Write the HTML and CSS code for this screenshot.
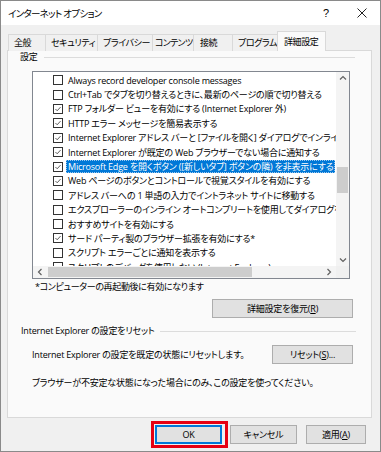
FILE: index.html
```html
<!DOCTYPE html>
<html lang="ja">
<head>
<meta charset="utf-8">
<title>インターネット オプション</title>
<link rel="stylesheet" href="styles.css">
</head>
<body>
<div class="window">
  <div class="titlebar">
    <span class="title">インターネット オプション</span>
    <span class="tb-help">?</span>
    <span class="tb-close">
      <svg width="10" height="10" viewBox="0 0 10 10"><path d="M0.5 0.5 L9.5 9.5 M9.5 0.5 L0.5 9.5" stroke="#222" stroke-width="1" fill="none"/></svg>
    </span>
  </div>
  <div class="body">
    <div class="tabs">
      <span class="tab">全般</span>
      <span class="tab">セキュリティ</span>
      <span class="tab">プライバシー</span>
      <span class="tab">コンテンツ</span>
      <span class="tab">接続</span>
      <span class="tab">プログラム</span>
      <span class="tab active">詳細設定</span>
    </div>
    <div class="panel">
      <div class="group-head g1"><span class="glabel">設定</span><span class="gline"></span></div>
      <div class="listbox">
        <div class="rows">
          <div class="row"><span class="cb"></span><span class="lbl">Always record developer console messages</span></div>
          <div class="row"><span class="cb"></span><span class="lbl">Ctrl+Tab でタブを切り替えるときに、最新のページの順で切り替える</span></div>
          <div class="row"><span class="cb on"><svg viewBox="0 0 10 10"><path d="M1.8 5 L4 7.2 L8.2 2.6" stroke="#333" stroke-width="1" fill="none"/></svg></span><span class="lbl">FTP フォルダー ビューを有効にする (Internet Explorer 外)</span></div>
          <div class="row"><span class="cb on"><svg viewBox="0 0 10 10"><path d="M1.8 5 L4 7.2 L8.2 2.6" stroke="#333" stroke-width="1" fill="none"/></svg></span><span class="lbl">HTTP エラー メッセージを簡易表示する</span></div>
          <div class="row"><span class="cb on"><svg viewBox="0 0 10 10"><path d="M1.8 5 L4 7.2 L8.2 2.6" stroke="#333" stroke-width="1" fill="none"/></svg></span><span class="lbl">Internet Explorer アドレス バーと [ファイルを開く] ダイアログでインライン オートコンプリートを使用する</span></div>
          <div class="row"><span class="cb on"><svg viewBox="0 0 10 10"><path d="M1.8 5 L4 7.2 L8.2 2.6" stroke="#333" stroke-width="1" fill="none"/></svg></span><span class="lbl">Internet Explorer が既定の Web ブラウザーでない場合に通知する</span></div>
          <div class="row"><span class="cb on"><svg viewBox="0 0 10 10"><path d="M1.8 5 L4 7.2 L8.2 2.6" stroke="#333" stroke-width="1" fill="none"/></svg></span><span class="lbl sel">Microsoft Edge を開くボタン ([新しいタブ] ボタンの隣) を非表示にする</span></div>
          <div class="row"><span class="cb on"><svg viewBox="0 0 10 10"><path d="M1.8 5 L4 7.2 L8.2 2.6" stroke="#333" stroke-width="1" fill="none"/></svg></span><span class="lbl">Web ページのボタンとコントロールで視覚スタイルを有効にする</span></div>
          <div class="row"><span class="cb"></span><span class="lbl">アドレス バーへの 1 単語の入力でイントラネット サイトに移動する</span></div>
          <div class="row"><span class="cb"></span><span class="lbl">エクスプローラーのインライン オートコンプリートを使用してダイアログを実行する</span></div>
          <div class="row"><span class="cb"></span><span class="lbl">おすすめサイトを有効にする</span></div>
          <div class="row"><span class="cb on"><svg viewBox="0 0 10 10"><path d="M1.8 5 L4 7.2 L8.2 2.6" stroke="#333" stroke-width="1" fill="none"/></svg></span><span class="lbl">サード パーティ製のブラウザー拡張を有効にする*</span></div>
          <div class="row"><span class="cb"></span><span class="lbl">スクリプト エラーごとに通知を表示する</span></div>
          <div class="row"><span class="cb"></span><span class="lbl">スクリプトのデバッグを使用しない (Internet Explorer)</span></div>
        </div>
        <div class="vscroll">
          <svg class="arr" width="8" height="6" viewBox="0 0 8 6"><path d="M1 4.5 L4 1.5 L7 4.5" stroke="#606060" stroke-width="1.2" fill="none"/></svg>
          <div class="vtrack"><div class="vthumb"></div></div>
          <svg class="arr" width="8" height="6" viewBox="0 0 8 6"><path d="M1 1.5 L4 4.5 L7 1.5" stroke="#606060" stroke-width="1.2" fill="none"/></svg>
        </div>
        <div class="hscroll">
          <svg class="arr" width="6" height="8" viewBox="0 0 6 8"><path d="M4.5 1 L1.5 4 L4.5 7" stroke="#606060" stroke-width="1.2" fill="none"/></svg>
          <div class="htrack"><div class="hthumb"></div></div>
          <svg class="arr" width="6" height="8" viewBox="0 0 6 8"><path d="M1.5 1 L4.5 4 L1.5 7" stroke="#606060" stroke-width="1.2" fill="none"/></svg>
        </div>
        <div class="corner"></div>
      </div>
      <div class="note">*コンピューターの再起動後に有効になります</div>
      <button class="btn restore">詳細設定を復元(<u>R</u>)</button>
      <div class="group-head g2"><span class="glabel">Internet Explorer の設定をリセット</span><span class="gline"></span></div>
      <div class="reset-row">
        <span class="rtext">Internet Explorer の設定を既定の状態にリセットします。</span>
        <button class="btn reset">リセット(<u>S</u>)...</button>
      </div>
      <div class="warn">ブラウザーが不安定な状態になった場合にのみ、この設定を使ってください。</div>
    </div>
    <div class="buttons">
      <div class="highlight"><button class="btn ok">OK</button></div>
      <button class="btn cancel">キャンセル</button>
      <button class="btn apply">適用(<u>A</u>)</button>
    </div>
  </div>
</div>
</body>
</html>
```
FILE: styles.css
```css
* { box-sizing: border-box; }
html, body { margin: 0; padding: 0; }
body {
  width: 381px;
  height: 452px;
  overflow: hidden;
  font-family: "Open Sans", "Noto Sans CJK JP", sans-serif;
  font-feature-settings: "palt";
  font-size: 9px;
  letter-spacing: -0.2px;
  color: #000;
  background: #f0f0f0;
}
.window {
  width: 381px;
  height: 452px;
  border: 1px solid #8a8a8a;
  background: #f0f0f0;
  display: flex;
  flex-direction: column;
}
.titlebar {
  height: 24px;
  background: #fff;
  display: flex;
  align-items: center;
  padding-left: 7px;
  flex-shrink: 0;
}
.title { font-size: 9.5px; letter-spacing: -0.7px; flex: 1; }
.tb-help { font-size: 11px; width: 12px; margin-right: 22px; font-family: "Liberation Sans", sans-serif; }
.tb-close { width: 10px; height: 10px; margin-right: 13px; display: flex; }
.body {
  flex: 1;
  display: flex;
  flex-direction: column;
  padding: 6px 8px 0 6px;
}
.tabs {
  display: flex;
  align-items: flex-end;
  height: 20px;
  padding-left: 1px;
  margin-bottom: -1px;
  position: relative;
  z-index: 1;
}
.tab {
  flex: none;
  min-width: 0;
  height: 17px;
  line-height: 16px;
  padding: 0 0 0 5px;
  text-align: left;
  border: 1px solid #d9d9d9;
  border-bottom: none;
  margin-right: -1px;
  background: #f0f0f0;
  letter-spacing: -0.4px;
  white-space: nowrap;
  overflow: hidden;
}
.tab:nth-child(1) { width: 38px; }
.tab:nth-child(2) { width: 53px; }
.tab:nth-child(3) { width: 56px; }
.tab:nth-child(4) { width: 42px; padding-left: 2px; letter-spacing: -0.7px; }
.tab:nth-child(5) { width: 40px; padding-left: 6px; }
.tab:nth-child(6) { width: 46px; }
.tab.active {
  width: 49px;
  height: 20px;
  line-height: 19px;
  background: #fafafa;
  padding-left: 6px;
  padding-bottom: 1px;
}
.panel {
  height: 368px;
  border: 1px solid #d9d9d9;
  background: #fafafa;
  display: flex;
  flex-direction: column;
}
.group-head {
  display: flex;
  align-items: center;
  height: 12px;
  line-height: 12px;
}
.g1 { padding-left: 12px; padding-right: 16px; }
.g2 { padding-left: 13px; padding-right: 15px; margin-top: 7px; }
.gline { flex: 1; height: 1px; background: #dcdcdc; margin-left: 6px; }
.listbox {
  margin-top: 8px;
  margin-left: 24px;
  width: 318px;
  height: 208px;
  border: 1px solid #828790;
  background: #fff;
  display: grid;
  grid-template-columns: 303px 13px;
  grid-template-rows: 194px 12px;
}
.rows {
  overflow: hidden;
  padding-top: 1px;
}
.row {
  height: 14.4px;
  display: flex;
  align-items: center;
  white-space: nowrap;
}
.cb {
  flex-shrink: 0;
  width: 10px;
  height: 10px;
  border: 1px solid #333;
  margin-left: 20px;
  display: flex;
  background: #fff;
}
.cb svg { width: 8px; height: 8px; }
.lbl {
  margin-left: 3px;
  padding: 0 2px;
  height: 13px;
  line-height: 13px;
}
.lbl.sel {
  background: #0078d7;
  color: #fff;
  outline: 1px dotted #9cc8ee;
  outline-offset: -1px;
}
.vscroll {
  background: #f4f4f4;
  display: flex;
  flex-direction: column;
  align-items: center;
}
.vscroll .arr { margin: 3px 0; flex-shrink: 0; }
.vtrack { flex: 1; width: 100%; }
.vthumb { margin: 83px 1px 0 1px; height: 26px; background: #cdcdcd; }
.hscroll {
  background: #f4f4f4;
  display: flex;
  align-items: center;
}
.hscroll .arr { margin: 0 4px; flex-shrink: 0; }
.htrack { flex: 1; height: 100%; }
.hthumb { margin: 1px 0 1px 1px; width: 204px; height: 10px; background: #cdcdcd; }
.corner { background: #f0f0f0; }
.note {
  margin-top: 1px;
  margin-left: 27px;
  line-height: 14px;
  height: 14px;
  letter-spacing: -0.35px;
}
.btn {
  font-family: inherit;
  font-feature-settings: "palt";
  font-size: 9px;
  letter-spacing: -0.2px;
  color: #000;
  background: #e1e1e1;
  border: 1px solid #adadad;
  height: 19px;
  padding: 0;
  line-height: 17px;
  border-radius: 0;
}
.btn u { text-decoration: underline; }
.restore {
  align-self: flex-end;
  margin-top: 5px;
  margin-right: 18px;
  width: 141px;
}
.reset-row {
  margin-top: 8px;
  display: flex;
  align-items: center;
  height: 19px;
  padding-left: 24px;
  padding-right: 18px;
}
.rtext { flex: 1; }
.reset { width: 81px; }
.warn {
  margin-top: 12px;
  margin-left: 24px;
  line-height: 14px;
}
.buttons {
  display: flex;
  align-items: center;
  margin-top: 3px;
  padding-left: 144px;
}
.highlight {
  border: 3px solid #e60012;
  padding: 1px 3px 1px 1px;
}
.ok { width: 67px; border: 1px solid #0078d7; box-shadow: inset 0 0 0 1px #0078d7; }
.cancel { width: 67px; margin-left: 2px; }
.apply { width: 60px; margin-left: 9px; }
```
